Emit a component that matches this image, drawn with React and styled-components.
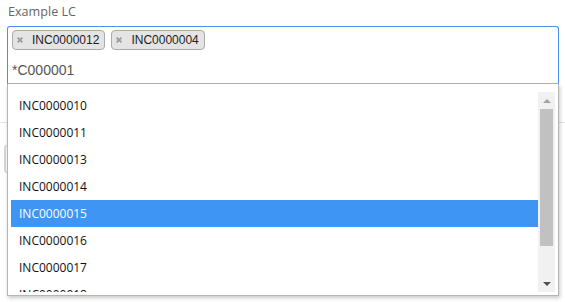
import React from "react";
import styled, { createGlobalStyle } from "styled-components";

const Global = createGlobalStyle`
  html, body { margin: 0; padding: 0; background: #ffffff; }
  body { font-family: "Open Sans", "Noto Sans", sans-serif; }
  * { box-sizing: border-box; }
`;

const Page = styled.div`
  width: 565px;
  height: 302px;
  overflow: hidden;
  position: relative;
`;

const Field = styled.div`
  position: relative;
  padding-left: 7px;
  width: 559px;
`;

const Label = styled.div`
  font-family: "Open Sans", "Noto Sans", sans-serif;
  font-size: 12.6px;
  line-height: 18px;
  color: #666666;
  margin: 3px 0 5px 1px;
`;

const SelectBox = styled.div`
  position: relative;
  width: 552px;
  border: 1px solid #4a8ff2;
  border-bottom-color: #b5b5b5;
  border-radius: 3px 3px 0 0;
  padding: 0 4px;
  background: #ffffff;
`;

const Tags = styled.div`
  display: flex;
  flex-wrap: wrap;
  gap: 6px;
  padding-top: 3px;
`;

const Tag = styled.div`
  display: flex;
  align-items: center;
  height: 20px;
  padding: 0 5px 0 4px;
  border: 1px solid #aaaaaa;
  border-radius: 4px;
  background: #e4e4e4;
  font-family: "Liberation Sans", Arial, sans-serif;
  font-size: 12px;
  color: #1e1e1e;
`;

const Remove = styled.svg`
  width: 6px;
  height: 6px;
  margin-right: 9px;
  flex: none;
`;

const Search = styled.div`
  margin-top: 7px;
  height: 26px;
  line-height: 26px;
  font-family: "Liberation Sans", Arial, sans-serif;
  font-size: 14px;
  color: #555555;
`;

const Dropdown = styled.div`
  position: absolute;
  top: 100%;
  left: 7px;
  width: 552px;
  border: 1px solid #b5b5b5;
  border-top: none;
  background: #ffffff;
  padding: 8px 3px 3px 3px;
  box-shadow: 1px 2px 4px rgba(0, 0, 0, 0.22);
  z-index: 2;
`;

const ListArea = styled.div`
  display: flex;
  height: 200px;
`;

const Options = styled.ul`
  list-style: none;
  margin: 0;
  padding: 0;
  flex: 1;
  overflow: hidden;
`;

const Option = styled.li`
  height: 27px;
  line-height: 27px;
  padding-left: 8px;
  font-family: "Open Sans", "Noto Sans", sans-serif;
  font-size: 12px;
  color: ${(p) => (p.$active ? "#ffffff" : "#111111")};
  background: ${(p) => (p.$active ? "#3e95f3" : "transparent")};
`;

const Scrollbar = styled.div`
  width: 17px;
  display: flex;
  flex-direction: column;
  background: #f1f1f1;
`;

const ArrowButton = styled.div`
  height: 17px;
  display: flex;
  align-items: center;
  justify-content: center;
`;

const Track = styled.div`
  flex: 1;
  padding: 0 2px;
`;

const Thumb = styled.div`
  height: 137px;
  background: #c1c1c1;
`;

const Divider = styled.div`
  margin-top: 38px;
  height: 1px;
  background: #e3e3e3;
`;

const UnderBox = styled.div`
  margin: 22px 0 0 4px;
  width: 200px;
  height: 28px;
  border: 1px solid #d6d6d6;
  border-left-width: 2px;
  border-radius: 3px;
`;

const tags = ["INC0000012", "INC0000004"];
const options = [
  "INC0000010",
  "INC0000011",
  "INC0000013",
  "INC0000014",
  "INC0000015",
  "INC0000016",
  "INC0000017",
  "INC0000018",
  "INC0000019",
];

export default function App() {
  return (
    <Page>
      <Global />
      <Field>
        <Label>Example LC</Label>
        <SelectBox>
          <Tags>
            {tags.map((t) => (
              <Tag key={t}>
                <Remove viewBox="0 0 6 6">
                  <path d="M0.6 0.6 L5.4 5.4 M5.4 0.6 L0.6 5.4" stroke="#999" strokeWidth="1.7" />
                </Remove>
                {t}
              </Tag>
            ))}
          </Tags>
          <Search>*C000001</Search>
        </SelectBox>
        <Dropdown>
          <ListArea>
            <Options>
              {options.map((o) => (
                <Option key={o} $active={o === "INC0000015"}>
                  {o}
                </Option>
              ))}
            </Options>
            <Scrollbar>
              <ArrowButton>
                <svg width="8" height="4" viewBox="0 0 8 4">
                  <path d="M0 4 L4 0 L8 4 Z" fill="#a3a3a3" />
                </svg>
              </ArrowButton>
              <Track>
                <Thumb />
              </Track>
              <ArrowButton>
                <svg width="8" height="4" viewBox="0 0 8 4">
                  <path d="M0 0 L8 0 L4 4 Z" fill="#505050" />
                </svg>
              </ArrowButton>
            </Scrollbar>
          </ListArea>
        </Dropdown>
      </Field>
      <Divider />
      <UnderBox />
    </Page>
  );
}
